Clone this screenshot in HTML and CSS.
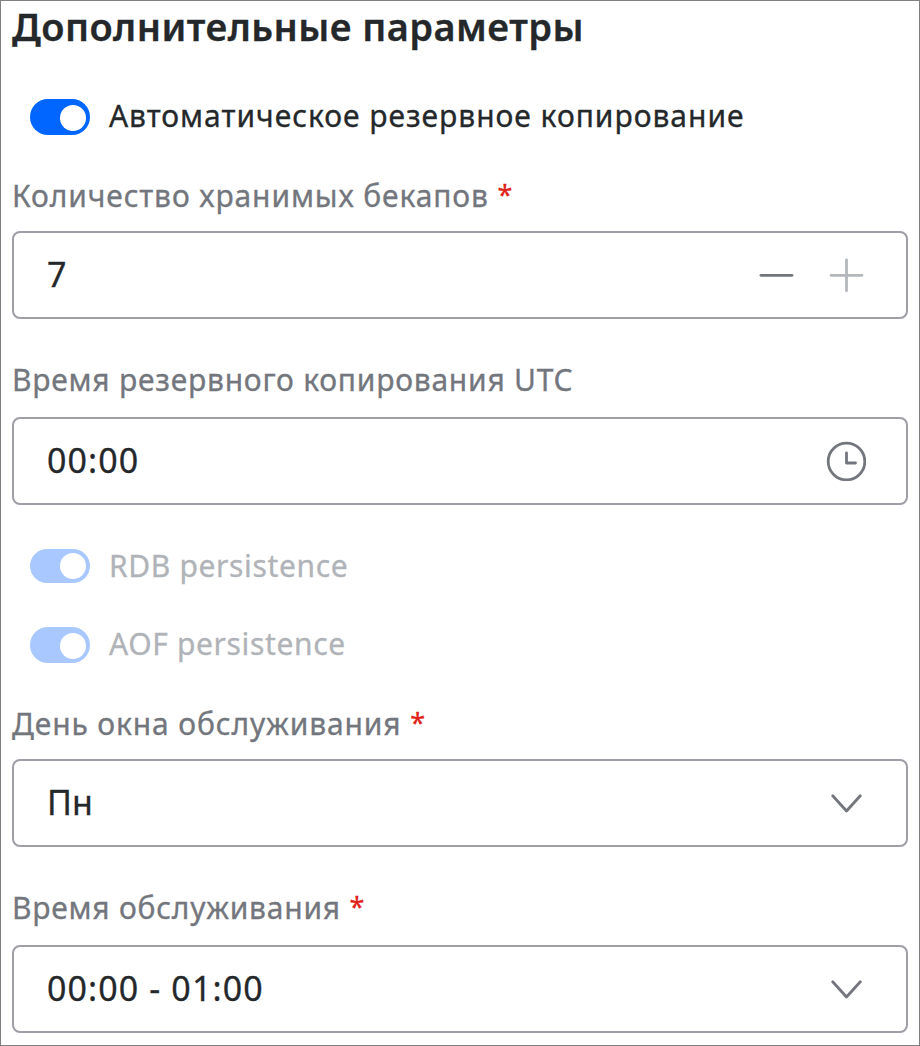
FILE: index.html
```
<!DOCTYPE html>
<html lang="ru">
<head>
    <meta charset="UTF-8">
    <title>Дополнительные параметры</title>
    <link rel="stylesheet" href="styles.css">
</head>
<body>
    <div class="panel">
        <h2 class="title">Дополнительные параметры</h2>

        <div class="switch-row">
            <span class="switch"></span>
            <span class="switch-text switch-backup">Автоматическое резервное копирование</span>
        </div>

        <div class="form-item">
            <div class="label">Количество хранимых бекапов <span class="required">*</span></div>
            <div class="field">
                <span class="value">7</span>
                <svg class="icon" viewBox="0 0 40 40"><path d="M5 20.3h31"/></svg>
                <svg class="icon icon-plus disabled" viewBox="0 0 40 40"><path d="M5 20.3h31M20.5 4.8v31"/></svg>
            </div>
        </div>

        <div class="form-item">
            <div class="label label-utc">Время резервного копирования UTC</div>
            <div class="field">
                <span class="value value-time">00:00</span>
                <svg class="icon" viewBox="0 0 40 40"><circle cx="20.5" cy="20.5" r="18.3"/><path d="M20.5 12v10h9"/></svg>
            </div>
        </div>

        <div class="switch-row switch-small disabled">
            <span class="switch"></span>
            <span class="switch-text">RDB persistence</span>
        </div>
        <div class="switch-row switch-next disabled">
            <span class="switch"></span>
            <span class="switch-text">AOF persistence</span>
        </div>

        <div class="form-item">
            <div class="label">День окна обслуживания <span class="required">*</span></div>
            <div class="field">
                <span class="value">Пн</span>
                <svg class="icon" viewBox="0 0 40 40"><path d="M6.7 12.7l13.8 15.3 13.8-15.3"/></svg>
            </div>
        </div>

        <div class="form-item">
            <div class="label label-time">Время обслуживания <span class="required">*</span></div>
            <div class="field">
                <span class="value value-time">00:00 - 01:00</span>
                <svg class="icon" viewBox="0 0 40 40"><path d="M6.7 12.7l13.8 15.3 13.8-15.3"/></svg>
            </div>
        </div>
    </div>
</body>
</html>
```
FILE: styles.css
```
body{
    margin: 0;
    background: #fff;
    font-family: "Noto Sans", sans-serif;
    color: #25282b;
}
.panel{
    box-sizing: border-box;
    width: 920px;
    height: 1046px;
    padding: 0 11px;
    border: 1px solid #808080;
    overflow: hidden;
}
.title{
    margin: 0 0 44px;
    height: 50px;
    line-height: 50px;
    font-size: 38px;
    font-weight: 600;
    letter-spacing: .45px;
    white-space: nowrap;
    -webkit-text-stroke: .3px;
}
.switch-row{
    display: flex;
    align-items: flex-start;
    height: 40px;
    margin: 40px 0 0 18px;
}
.switch-next{
    margin-top: 38px;
}
.switch{
    box-sizing: border-box;
    width: 60px;
    height: 36px;
    margin: 4px 19px 0 0;
    padding: 6px 4px 0 30px;
    border-radius: 18px;
    background: #0066ff;
}
.switch:after{
    content: "";
    display: block;
    width: 26px;
    height: 26px;
    border-radius: 50%;
    background: #fff;
}
.switch-small .switch{
    height: 34px;
    padding-top: 4px;
}
.switch-text{
    font-size: 30px;
    line-height: 42px;
    letter-spacing: .64px;
    white-space: nowrap;
    -webkit-text-stroke: .3px;
}
.switch-backup{
    letter-spacing: .97px;
}
.switch-row.disabled .switch{
    background: #a8c8ff;
}
.switch-row.disabled .switch-text{
    color: #b0b3b8;
}
.form-item{
    margin-top: 40px;
}
.label{
    height: 40px;
    margin-bottom: 16px;
    line-height: 42px;
    font-size: 30px;
    letter-spacing: .87px;
    color: #73767d;
    white-space: nowrap;
    -webkit-text-stroke: .3px;
}
.label-utc, .label-time{
    margin-bottom: 18px;
    letter-spacing: .76px;
}
.required{
    position: relative;
    top: -2px;
    font-size: 27px;
    color: #e01f19;
}
.field{
    box-sizing: border-box;
    display: flex;
    align-items: center;
    height: 88px;
    padding: 0 40px 0 33px;
    border: 2px solid #9d9ea6;
    border-radius: 8px;
}
.value{
    flex: 1;
    padding-bottom: 2px;
    font-size: 34px;
    line-height: 48px;
    -webkit-text-stroke: .3px;
}
.value-time{
    letter-spacing: 1.1px;
}
.icon{
    width: 40px;
    height: 40px;
    fill: none;
    stroke: #73767d;
    stroke-width: 2.8;
    stroke-linecap: round;
    stroke-linejoin: round;
}
.icon-plus{
    margin-left: 30px;
}
.icon.disabled{
    stroke: #b4b7bb;
}
```
